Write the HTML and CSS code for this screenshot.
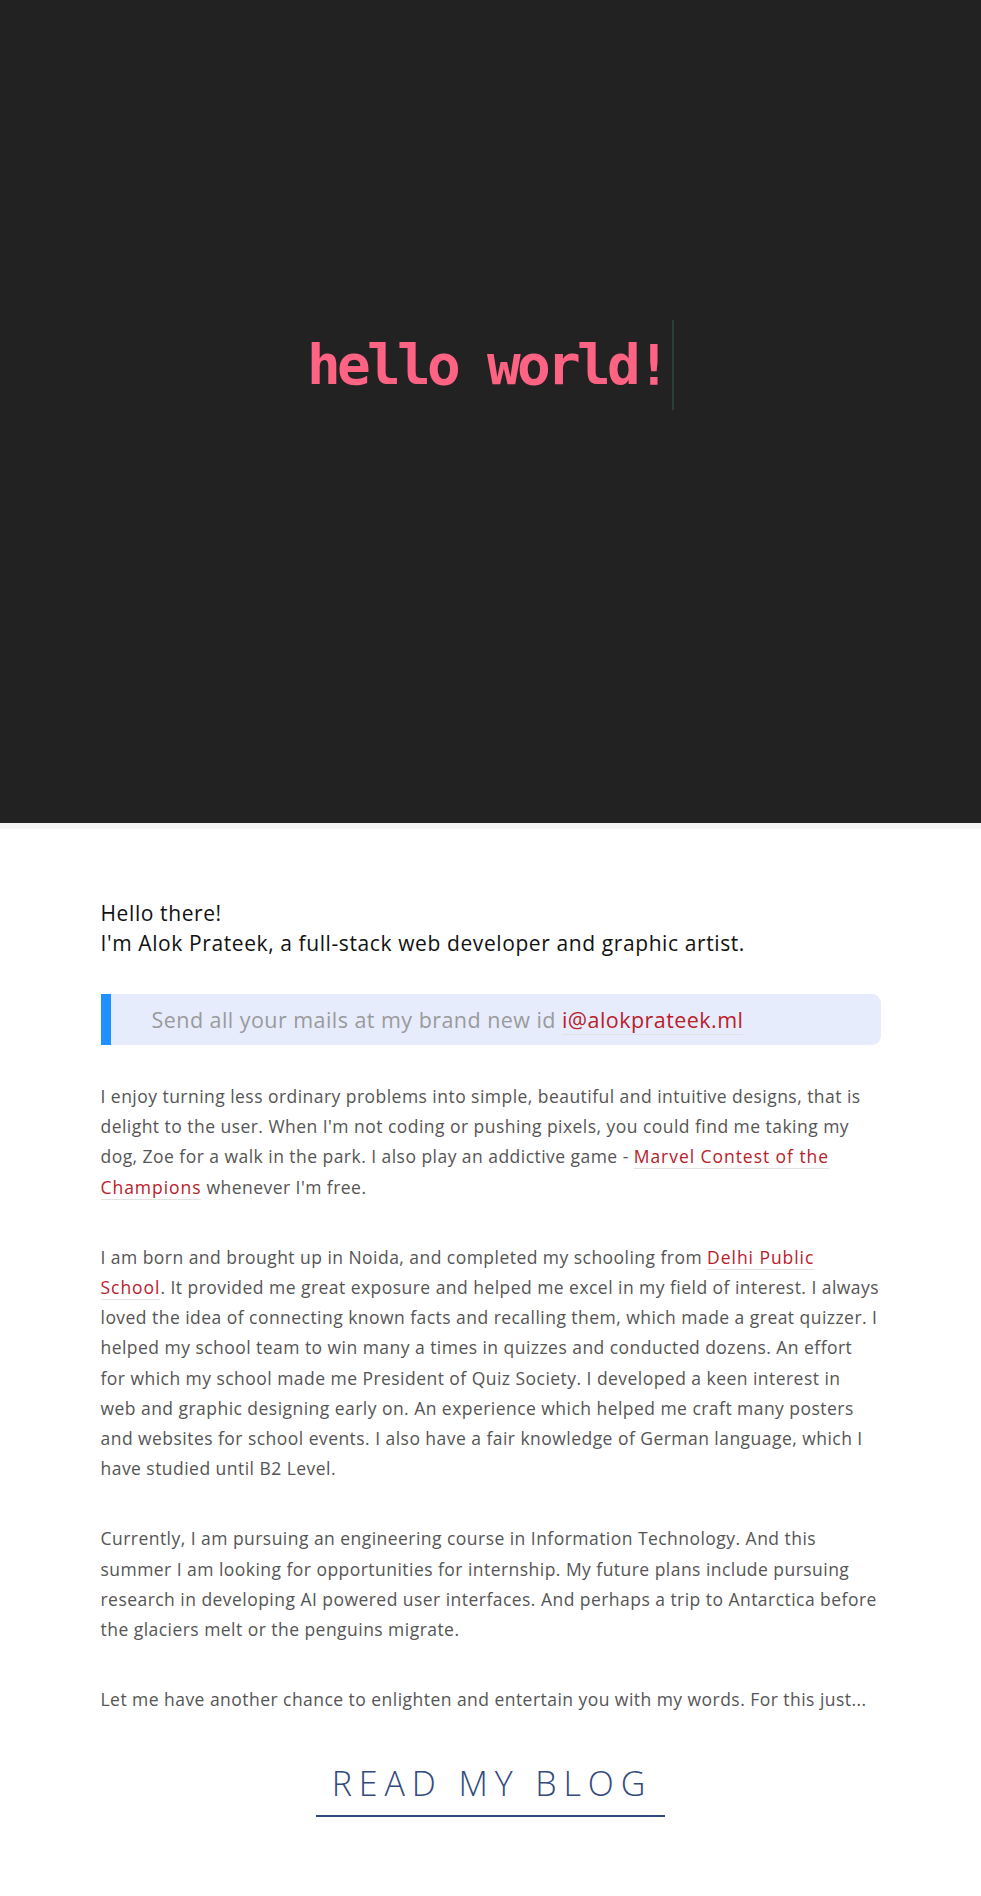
FILE: index.html
```html
<!DOCTYPE html>
<html lang="en">
<head>
<meta charset="utf-8">
<title>Alok Prateek</title>
<link rel="stylesheet" href="styles.css">
</head>
<body>
<header class="hero">
  <h1 class="typed">hello world!</h1>
</header>
<main class="content">
  <p class="intro">Hello there!<br>I'm Alok Prateek, a full-stack web developer and graphic artist.</p>
  <blockquote class="notice">Send all your mails at my brand new id <a class="link" href="#">i@alokprateek.ml</a></blockquote>
  <p class="para">I enjoy turning less ordinary problems into simple, beautiful and intuitive designs, that is delight to the user. When I'm not coding or pushing pixels, you could find me taking my dog, Zoe for a walk in the park. I also play an addictive game - <a class="link" href="#">Marvel Contest of the Champions</a> whenever I'm free.</p>
  <p class="para">I am born and brought up in Noida, and completed my schooling from <a class="link" href="#">Delhi Public School</a>. It provided me great exposure and helped me excel in my field of interest. I always loved the idea of connecting known facts and recalling them, which made a great quizzer. I helped my school team to win many a times in quizzes and conducted dozens. An effort for which my school made me President of Quiz Society. I developed a keen interest in web and graphic designing early on. An experience which helped me craft many posters and websites for school events. I also have a fair knowledge of German language, which I have studied until B2 Level.</p>
  <p class="para">Currently, I am pursuing an engineering course in Information Technology. And this summer I am looking for opportunities for internship. My future plans include pursuing research in developing AI powered user interfaces. And perhaps a trip to Antarctica before the glaciers melt or the penguins migrate.</p>
  <p class="para">Let me have another chance to enlighten and entertain you with my words. For this just...</p>
  <div class="cta-wrap">
    <a class="cta" href="#">READ MY BLOG</a>
  </div>
</main>
</body>
</html>
```
FILE: styles.css
```css
html, body {
  margin: 0;
  padding: 0;
  background: #ffffff;
}

body {
  font-family: "Open Sans", "Liberation Sans", sans-serif;
  height: 1896px;
}

.hero {
  background: #222222;
  border-bottom: 6px solid #f4f4f4;
  display: flex;
  align-items: center;
  justify-content: center;
  padding-bottom: 94px;
  box-sizing: content-box;
  height: 729px;
}

.typed {
  margin: 0;
  font-family: "DejaVu Sans Mono", "Liberation Mono", monospace;
  font-weight: bold;
  font-size: 56px;
  letter-spacing: -3.7px;
  line-height: 90px;
  color: #ff6384;
  border-right: 2px solid #2a4034;
  padding-right: 5px;
}

.content {
  width: 780px;
  margin: 0 auto;
  padding-top: 69px;
}

.intro {
  margin: 0;
  font-size: 21px;
  letter-spacing: 0.6px;
  line-height: 30px;
  color: #111111;
}

.notice {
  margin: 36px 0 0 0;
  background: #e7ecfd;
  border-left: 10px solid #1e90ff;
  border-radius: 0 9px 9px 0;
  padding: 10px 20px 10px 41px;
  font-size: 21.5px;
  letter-spacing: 0.45px;
  line-height: 31px;
  color: #9a9a9a;
}

.link {
  color: #b9202a;
  text-decoration: none;
  border-bottom: 1px solid #e2e2e2;
}

.para {
  margin: 40px 0 0 0;
  font-size: 17.5px;
  letter-spacing: 0.46px;
  line-height: 30.2px;
  color: #555555;
}

.para .link {
  letter-spacing: 0.95px;
}

.notice + .para {
  margin-top: 36px;
}

.cta-wrap {
  display: flex;
  justify-content: center;
  margin-top: 49px;
}

.cta {
  display: inline-block;
  font-size: 34px;
  font-weight: 300;
  line-height: 40px;
  letter-spacing: 6.9px;
  color: #324a7c;
  text-decoration: none;
  padding: 0 13px 12px 16px;
  border-bottom: 2px solid #324a7c;
}
```
